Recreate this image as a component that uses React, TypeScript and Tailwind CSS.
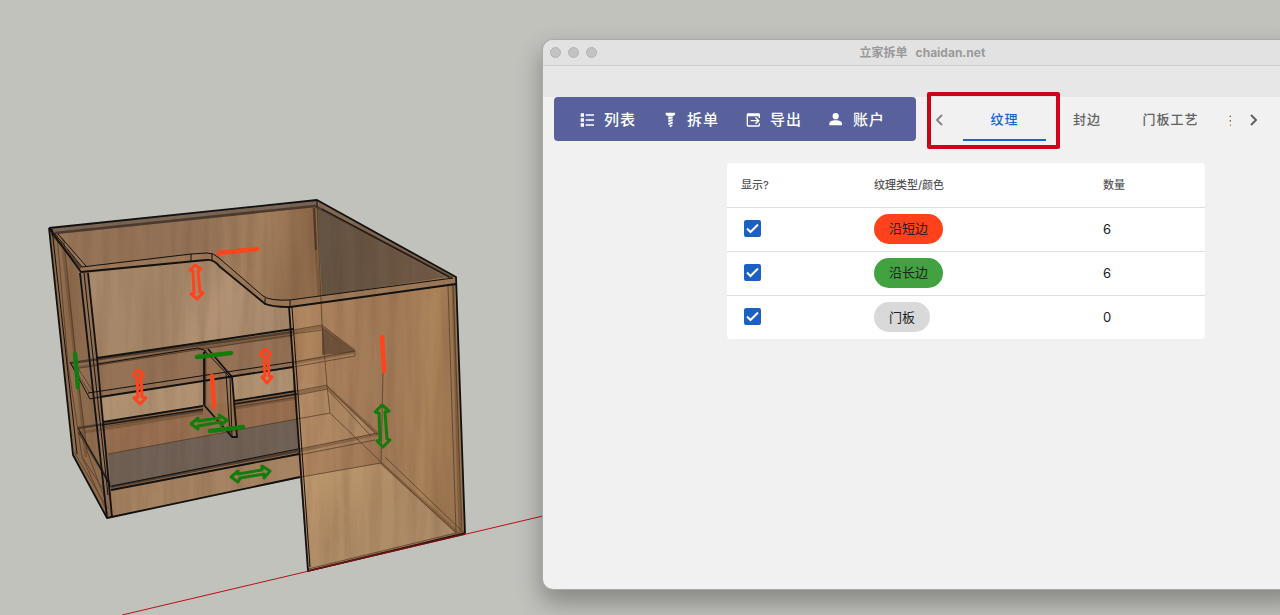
import React from "react";

type IconName = "list" | "screw" | "export" | "account";

function ToolIcon({ name }: { name: IconName }) {
  return (
    <svg viewBox="0 0 24 24" className="size-4 shrink-0" fill="currentColor" aria-hidden="true">
      {name === "list" && <path d="M1 2h5v5H1zM8.500 3.500H21v2.200H8.500zM1 9.500h5v5H1zM8.500 11H21v2.200H8.500zM1 17h5v5H1zM8.500 18.500H21v2.200H8.500z" />}
      {name === "screw" && <path d="M4 1h14v3l-3.500 2.500h-7L4 4zM8 7h6.500v2.500L8 11.500zM8 12.500l6.500-2v3L8 15.500zM8 16.500l6.500-2v3L8 19.500zM9 20.500l5-1.500v1.500L11.500 23z" />}
      {name === "export" && <path d="M3 2h16a2 2 0 0 1 2 2v5h-2V6.500H3v13.500h16v-3h2v3a2 2 0 0 1-2 2H3a2 2 0 0 1-2-2V4a2 2 0 0 1 2-2zM15 7.500l5.500 5.500-5.500 5.500-1.500-1.500 3-3H7v-2h9.500l-3-3z" />}
      {name === "account" && <path d="M10 1.500a4.700 4.700 0 1 1 0 9.400A4.700 4.700 0 0 1 10 1.500zM10 12.500c5.500 0 9.500 2 9.500 4.800V20H.500v-2.700c0-2.800 4-4.800 9.500-4.800z" />}
    </svg>
  );
}

const tools: { icon: IconName; label: string }[] = [
  { icon: "list", label: "列表" },
  { icon: "screw", label: "拆单" },
  { icon: "export", label: "导出" },
  { icon: "account", label: "账户" },
];

const rows = [
  { label: "沿短边", color: "bg-[#ff421c]", count: 6 },
  { label: "沿长边", color: "bg-[#42a240]", count: 6 },
  { label: "门板", color: "bg-[#d9d9d9]", count: 0 },
];

function Cabinet() {
  return (
    <svg
      className="absolute inset-0 h-full w-full"
      viewBox="0 0 1280 615"
      preserveAspectRatio="xMinYMin slice"
      role="img"
      aria-label="柜体模型"
    >
      <defs>
        <linearGradient id="back" x1="0" x2="1" y1="0" y2="0.150">
          <stop offset="0" stopColor="#997658" />
          <stop offset="0.350" stopColor="#927156" />
          <stop offset="0.500" stopColor="#a68260" />
          <stop offset="0.620" stopColor="#8f6b4b" />
          <stop offset="1" stopColor="#a07550" />
        </linearGradient>
        <linearGradient id="open" x1="0" x2="1" y1="0" y2="0.200">
          <stop offset="0" stopColor="#a98a6c" />
          <stop offset="0.450" stopColor="#a48566" />
          <stop offset="0.700" stopColor="#b29273" />
          <stop offset="1" stopColor="#a98a6e" />
        </linearGradient>
        <linearGradient id="side" x1="0" x2="1" y1="0" y2="0.100">
          <stop offset="0" stopColor="#b68b63" />
          <stop offset="0.400" stopColor="#a47d5b" />
          <stop offset="0.600" stopColor="#9f7856" />
          <stop offset="0.800" stopColor="#ac855c" />
          <stop offset="1" stopColor="#9a7450" />
        </linearGradient>
        <linearGradient id="floor" x1="0" x2="1" y1="0" y2="1">
          <stop offset="0" stopColor="#c09a6e" />
          <stop offset="0.450" stopColor="#b08c67" />
          <stop offset="1" stopColor="#af8f6d" />
        </linearGradient>
        <linearGradient id="dark" x1="0" x2="1">
          <stop offset="0" stopColor="#655343" />
          <stop offset="1" stopColor="#735b47" />
        </linearGradient>
        <filter id="grain" x="0" y="0" width="1" height="1" colorInterpolationFilters="sRGB">
          <feTurbulence type="fractalNoise" baseFrequency="0.090 0.007" numOctaves="5" seed="8" />
          <feColorMatrix values="0 0 0 0 0.300  0 0 0 0 0.180  0 0 0 0 0.100  1.200 0 0 0 -0.450" />
        </filter>
        <clipPath id="solid">
          <path d="M49 228L317 200L456 277L465 533L308 571L300 478L107 518L73 455Z" />
        </clipPath>
      </defs>

      <path d="M122 615L543 516" stroke="#b5121b" strokeWidth="1" />

      <path d="M49 228L317 200L456 277L465 533L308 571L300 478L107 518L73 455Z" fill="url(#back)" />
      <path d="M49 228L81 270L107 518L73 455Z" fill="#906d4f" />
      <path d="M88 273L206 260Q214 259 218 263L265 305Q270 307 290 307L293 330L97 358Z" fill="url(#open)" />
      <path d="M73 365L293 331L293 366L91 398Z" fill="#957256" />
      <path d="M101 397L293 367V391L103 422Z" fill="#b09272" />
      <path d="M102 423L296 391L297 419L108 454Z" fill="#986f50" />
      <path d="M108 454L297 419L299 450L111 487Z" fill="#716257" />
      <path d="M111 491L299 455L301 477L112 517Z" fill="#a68362" />
      <path d="M317 207L447 277L322 296Z" fill="url(#dark)" />
      <path d="M290 307L456 284L465 533L308 571Z" fill="url(#side)" />
      <path d="M301 477L381 463L456 533L308 569Z" fill="url(#floor)" />
      <path d="M297 382L326 386L377 435L299 450Z" fill="#b28c66" opacity=".7" />
      <path d="M322 327L355 352L322 355Z" fill="#6f533d" />
      <path d="M294 332L322 327V356L294 362Z" fill="#ad845b" />
      <path d="M49 228L317 200V207L58 234Z" fill="#7c6656" />
      <path d="M317 200L456 277L447 278L315 207Z" fill="#836953" />
      <path d="M49 228L58 235L88 266L191 255L212 254L265 299Q273 302 290 300L456 277V284L290 307H273L218 266Q212 260 203 261L81 272Z" fill="#9e7959" />
      <path d="M203 349L232 377L237 437H232L204 405Z" fill="#98704e" opacity=".8" />

      <g clipPath="url(#solid)">
        <rect x="45" y="195" width="425" height="380" filter="url(#grain)" opacity=".25" />
      </g>

      <g fill="none" stroke="#30241c" strokeWidth="2.500" opacity=".65">
        <path d="M55 233L315 206L452 278M71 363L200 345L293 332M78 428L203 410M235 404L297 394M111 487L298 451" />
        <path d="M51 233L81 268M205 350V405M79 432L110 484M314 208L316 250" />
      </g>
      <g fill="none" stroke="#5b4029" strokeWidth="3" opacity=".4">
        <path d="M78 433L203 413M235 408L297 398M73 368L200 348L293 335M293 332L322 327L355 351M326 386L378 434L299 451M381 463L457 532M62 238L86 457M453 284L460 531M294 363L354 352M297 393L327 387M316 250L319 296" />
      </g>
      <g fill="none" stroke="#49321f" strokeWidth="1" opacity=".65">
        <path d="M57 234L68 365L82 457L105 492M64 240L77 370L87 451L104 497" />
        <path d="M317 207L322 325L327 385L330 413L381 462M326 385L377 435M322 325L355 351M327 389L371 436" />
        <path d="M293 330L322 325M293 334L322 330M294 362L355 351V356L293 367M296 391L327 385M297 395L328 389" />
        <path d="M299 449L378 433M299 455L375 440M297 419L330 413M301 477L381 463L456 533M385 457L461 530" />
        <path d="M381 463L383 372M448 286L456 532M453 284L462 531M308 569L464 531" />
        <path d="M73 369L293 335M102 427L203 411M235 407L297 397M108 454L297 419" />
        <path d="M74 452L108 509M82 457L108 514M70 362L90 393M76 365L94 393" />
      </g>
      <g fill="none" stroke="#111" strokeLinejoin="round">
        <path strokeWidth="1.800" d="M49 228L317 200L456 277L465 533L308 571L289 307M49 228L73 455L107 518L300 477M49 228L81 272L206 260Q214 259 219 266L264 303Q270 307 290 307L456 284M80 273L107 518M88 273L97 358L112 517" />
        <path strokeWidth="1" d="M51 229L82 267L191 254L207 253Q214 253 219 258L263 296Q270 301 290 300L453 278M191 254V261M212 253V260M265 298V305M290 300V307M317 201V207M58 234L86 266M322 209L449 277M292 307L310 567M84 273L108 495M52 229L77 454" />
        <path strokeWidth="1.800" d="M97 358L293 329M100 397L293 367M103 422L203 406M234 401L296 391M111 490L299 454M204 352V405L232 437H237L232 377L208 349" />
        <path strokeWidth="1" d="M88 393L293 362M70 362L90 399L100 397M98 364L198 348L204 350L230 377L232 437M226 373L230 435M112 486L298 449M78 428L111 487M102 425L203 409M234 404L297 394" />
      </g>
      <path d="M308 571L465 534" stroke="#6a1517" strokeWidth="1.500" />

      <g fill="none" stroke="#ff431d" strokeWidth="3" strokeLinejoin="round" strokeLinecap="round">
        <path d="M195 265L190 270L193 271L194 293L191 294L197 299L203 293L200 292L198 271L201 269Z" />
        <path d="M138 370L133 375L137 377L138 397L134 398L140 404L146 398L142 397L141 377L144 375Z" />
        <path d="M265 349L260 355L264 356L265 376L262 377L267 383L272 377L269 376L268 356L271 354Z" />
        <path strokeWidth="4.500" d="M219 253L257 249M382 337L384 371M212 376L214 407" />
      </g>
      <g fill="none" stroke="#137c0c" strokeWidth="3" strokeLinejoin="round" strokeLinecap="round">
        <path d="M382 405L375 412L379 413L380 440L377 441L383 447L390 440L387 439L385 412L389 411Z" />
        <path d="M231 477L238 471V474L262 470V466L270 471L264 478V474L240 478L238 482Z" />
        <path d="M191 424L198 418V421L220 418L219 415L227 420L221 425V422L198 426V429Z" />
        <path strokeWidth="4.500" d="M75 354L78 387M197 357L231 353M210 431L243 427" />
      </g>
    </svg>
  );
}

export default function App() {
  return (
    <main className="relative min-h-screen overflow-hidden bg-[#c1c2bc] font-['Inter','Noto_Sans_CJK_SC',sans-serif]">
      <Cabinet />
      <section className="absolute top-10 left-[543px] min-h-[549px] w-[759px] overflow-hidden rounded-[10px] bg-[#f1f1f1] shadow-[0_0_1px_1px_#aaa,0_12px_24px_2px_rgba(0,0,0,0.300)]">
        <header className="grid h-[26px] grid-cols-[1fr_auto_1fr] items-center border-b border-[#cecece] bg-[#e2e2e2] px-[7px]">
          <div className="flex gap-[7px]">
            <span className="size-[11px] rounded-full border border-[#b3b3b3] bg-[#c3c3c3]" />
            <span className="size-[11px] rounded-full border border-[#b3b3b3] bg-[#c3c3c3]" />
            <span className="size-[11px] rounded-full border border-[#b3b3b3] bg-[#c3c3c3]" />
          </div>
          <h1 className="flex gap-2 text-xs font-bold text-[#999]">
            <span>立家拆单</span>
            <span>chaidan.net</span>
          </h1>
        </header>
        <div className="h-[31px] bg-[#e7e7e7]" />

        <div className="flex h-11 items-stretch pl-[11px]">
          <nav className="flex w-[362px] items-center gap-[27px] rounded bg-[#58619c] pt-[2px] pl-[26px] text-[15px] font-medium text-white">
            {tools.map((tool) => (
              <button key={tool.label} type="button" className="flex items-center gap-2 whitespace-nowrap tracking-[1px]">
                <ToolIcon name={tool.icon} />
                {tool.label}
              </button>
            ))}
          </nav>
          <div className="relative flex items-stretch pl-[11px] text-[13px] font-medium text-[#616161]">
            <div className="pointer-events-none absolute -top-[5px] left-[11px] h-[57px] w-[133px] rounded-[2px] border-4 border-[#d0021b]" />
            <button type="button" aria-label="向前" className="flex w-6 items-center justify-center pt-[2px] text-[#858585]">
              <svg viewBox="0 0 8 12" className="h-3 w-2" fill="none" stroke="currentColor" strokeWidth="2"><path d="M7 1L2 6L7 11" /></svg>
            </button>
            <div role="tablist" className="flex w-[280px] overflow-hidden pl-3">
              <button type="button" role="tab" aria-selected="true" className="w-[83px] shrink-0 border-b-2 border-[#1b64cb] pt-1 tracking-[1px] text-[#1b64cb]">纹理</button>
              <button type="button" role="tab" aria-selected="false" className="w-[82px] shrink-0 pt-[2px] tracking-[1px]">封边</button>
              <button type="button" role="tab" aria-selected="false" className="w-[85px] shrink-0 pt-[2px] tracking-[1px]">门板工艺</button>
              <button type="button" role="tab" aria-selected="false" className="shrink-0 pt-[2px] pl-4 tracking-[1px]">打孔</button>
            </div>
            <button type="button" aria-label="向后" className="flex w-[46px] items-center justify-center pt-[2px]">
              <svg viewBox="0 0 8 12" className="h-3 w-2" fill="none" stroke="currentColor" strokeWidth="2"><path d="M1 1L6 6L1 11" /></svg>
            </button>
          </div>
        </div>

        <div className="mt-[22px] ml-[184px] w-[478px] overflow-hidden rounded bg-white">
          <table className="w-full table-fixed border-collapse text-left">
            <colgroup>
              <col className="w-[133px]" />
              <col className="w-[229px]" />
              <col />
            </colgroup>
            <thead>
              <tr className="h-11 text-[11px] text-[#555]">
                <th className="pl-[14px] font-medium">显示?</th>
                <th className="pl-[14px] font-medium">纹理类型/颜色</th>
                <th className="pl-[14px] font-medium">数量</th>
              </tr>
            </thead>
            <tbody>
              {rows.map((row) => (
                <tr key={row.label} className="h-11 border-t border-[#dfdfdf] text-[13px] text-[#202020]">
                  <td className="pb-[2px] pl-[17px]">
                    <label className="relative block size-[17px]">
                      <input type="checkbox" defaultChecked aria-label={row.label} className="peer block size-[17px] appearance-none rounded-[2px] border-2 border-[#1b61c5] checked:bg-[#1b61c5]" />
                      <svg viewBox="0 0 17 17" className="pointer-events-none absolute inset-0 hidden size-[17px] peer-checked:block" fill="none" stroke="white" strokeWidth="2" aria-hidden="true"><path d="M3 8.500L6.500 12L14 4.500" /></svg>
                    </label>
                  </td>
                  <td className="pl-[14px]">
                    <span className={`inline-flex h-[30px] items-center rounded-full px-[15px] align-middle ${row.color}`}>{row.label}</span>
                  </td>
                  <td className="pt-px pl-[14px]">{row.count}</td>
                </tr>
              ))}
            </tbody>
          </table>
        </div>
      </section>
    </main>
  );
}
